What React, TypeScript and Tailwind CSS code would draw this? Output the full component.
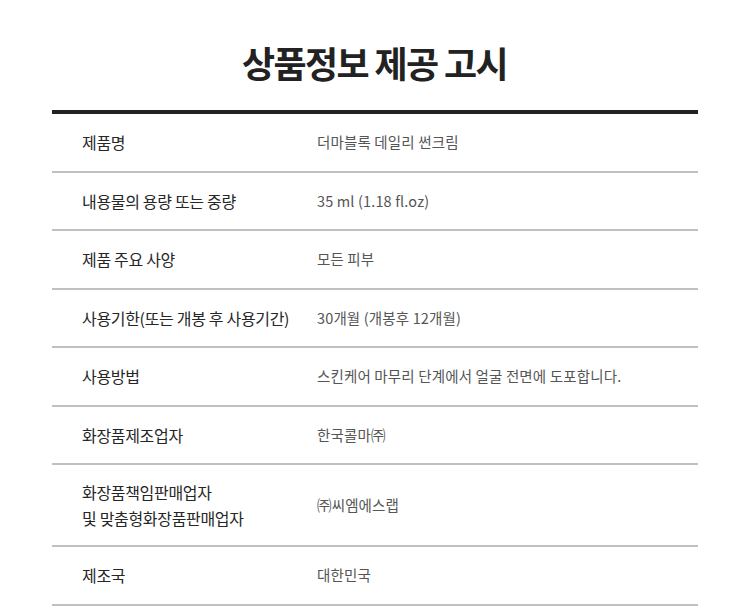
import React from "react";

const rows: { label: string[]; value: string }[] = [
  { label: ["제품명"], value: "더마블록 데일리 썬크림" },
  { label: ["내용물의 용량 또는 중량"], value: "35 ml (1.18 fl.oz)" },
  { label: ["제품 주요 사양"], value: "모든 피부" },
  { label: ["사용기한(또는 개봉 후 사용기간)"], value: "30개월 (개봉후 12개월)" },
  { label: ["사용방법"], value: "스킨케어 마무리 단계에서 얼굴 전면에 도포합니다." },
  { label: ["화장품제조업자"], value: "한국콜마㈜" },
  { label: ["화장품책임판매업자", "및 맞춤형화장품판매업자"], value: "㈜씨엠에스랩" },
  { label: ["제조국"], value: "대한민국" },
];

export default function App() {
  return (
    <div
      className="w-[743px] h-[614px] bg-white overflow-hidden"
      style={{ fontFamily: '"Noto Sans CJK KR", "Noto Sans", sans-serif' }}
    >
      <h1 className="pt-[36px] pl-[6px] text-center text-[36px] leading-[52px] font-bold text-[#222] tracking-[-0.045em]">
        상품정보 제공 고시
      </h1>
      <div className="ml-[52px] w-[646px] mt-[22px] border-t-4 border-[#222]">
        {rows.map((r, i) => (
          <div
            key={i}
            className={`flex items-center border-b-2 border-[#c0c0c0] ${
              r.label.length > 1 ? "h-[82px]" : "h-[58.5px]"
            }`}
          >
            <div className="w-[265px] pl-[30px] text-[16px] leading-[26px] text-[#262626] tracking-[-0.02em]">
              {r.label.map((l, j) => (
                <div key={j}>{l}</div>
              ))}
            </div>
            <div className="text-[14.5px] text-[#555] tracking-[0.01em]">{r.value}</div>
          </div>
        ))}
      </div>
    </div>
  );
}
